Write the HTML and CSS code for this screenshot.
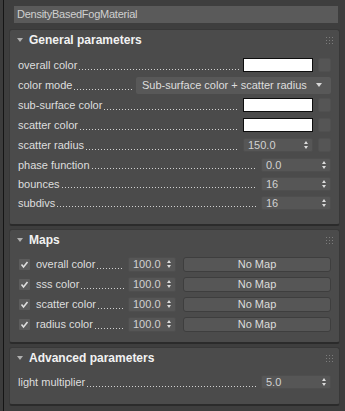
FILE: index.html
```html
<!DOCTYPE html>
<html>
<head>
<meta charset="utf-8">
<link rel="stylesheet" href="styles.css">
</head>
<body>
<div class="app">
  <div class="edge"></div>
  <div class="main">
    <div class="namefield">DensityBasedFogMaterial</div>

    <section class="rollout general">
      <header class="rh">
        <span class="tri"></span><span class="rt">General parameters</span>
        <svg class="grip" width="7" height="7" viewBox="0 0 7 7"><g fill="#7c7c7c"><rect x="0" y="0" width="1" height="1"/><rect x="3" y="0" width="1" height="1"/><rect x="6" y="0" width="1" height="1"/><rect x="0" y="3" width="1" height="1"/><rect x="3" y="3" width="1" height="1"/><rect x="6" y="3" width="1" height="1"/><rect x="0" y="6" width="1" height="1"/><rect x="3" y="6" width="1" height="1"/><rect x="6" y="6" width="1" height="1"/></g></svg>
      </header>
      <div class="rb">
        <div class="row"><span class="lbl">overall color</span><span class="lead"></span><span class="sw"></span><span class="sq"></span></div>
        <div class="row"><span class="lbl">color mode</span><span class="lead"></span><span class="dd"><span>Sub-surface color + scatter radius</span><svg width="6" height="4" viewBox="0 0 6 4"><polygon points="0,0 6,0 3,4" fill="#d8d8d8"/></svg></span></div>
        <div class="row"><span class="lbl">sub-surface color</span><span class="lead"></span><span class="sw"></span><span class="sq"></span></div>
        <div class="row"><span class="lbl">scatter color</span><span class="lead"></span><span class="sw"></span><span class="sq"></span></div>
        <div class="row"><span class="lbl">scatter radius</span><span class="lead"></span><span class="sp"><span>150.0</span><svg class="ar" width="4" height="8" viewBox="0 0 4 8"><polygon points="0,3 2,0 4,3" fill="#dcdcdc"/><polygon points="0,5 4,5 2,8" fill="#dcdcdc"/></svg></span><span class="sq"></span></div>
        <div class="row s"><span class="lbl">phase function</span><span class="lead"></span><span class="sp"><span>0.0</span><svg class="ar" width="4" height="8" viewBox="0 0 4 8"><polygon points="0,3 2,0 4,3" fill="#dcdcdc"/><polygon points="0,5 4,5 2,8" fill="#dcdcdc"/></svg></span></div>
        <div class="row s"><span class="lbl">bounces</span><span class="lead"></span><span class="sp"><span>16</span><svg class="ar" width="4" height="8" viewBox="0 0 4 8"><polygon points="0,3 2,0 4,3" fill="#dcdcdc"/><polygon points="0,5 4,5 2,8" fill="#dcdcdc"/></svg></span></div>
        <div class="row s"><span class="lbl">subdivs</span><span class="lead"></span><span class="sp"><span>16</span><svg class="ar" width="4" height="8" viewBox="0 0 4 8"><polygon points="0,3 2,0 4,3" fill="#dcdcdc"/><polygon points="0,5 4,5 2,8" fill="#dcdcdc"/></svg></span></div>
      </div>
    </section>

    <section class="rollout maps">
      <header class="rh">
        <span class="tri"></span><span class="rt">Maps</span>
        <svg class="grip" width="7" height="7" viewBox="0 0 7 7"><g fill="#7c7c7c"><rect x="0" y="0" width="1" height="1"/><rect x="3" y="0" width="1" height="1"/><rect x="6" y="0" width="1" height="1"/><rect x="0" y="3" width="1" height="1"/><rect x="3" y="3" width="1" height="1"/><rect x="6" y="3" width="1" height="1"/><rect x="0" y="6" width="1" height="1"/><rect x="3" y="6" width="1" height="1"/><rect x="6" y="6" width="1" height="1"/></g></svg>
      </header>
      <div class="rb">
        <div class="row"><span class="chk"><svg width="11" height="11" viewBox="0 0 11 11"><path d="M2.5 5.5 L4.5 8 L8.5 3" fill="none" stroke="#dedede" stroke-width="1.6"/></svg></span><span class="lbl">overall color</span><span class="lead"></span><span class="sp n"><span>100.0</span><svg class="ar" width="4" height="8" viewBox="0 0 4 8"><polygon points="0,3 2,0 4,3" fill="#dcdcdc"/><polygon points="0,5 4,5 2,8" fill="#dcdcdc"/></svg></span><span class="nm">No Map</span></div>
        <div class="row"><span class="chk"><svg width="11" height="11" viewBox="0 0 11 11"><path d="M2.5 5.5 L4.5 8 L8.5 3" fill="none" stroke="#dedede" stroke-width="1.6"/></svg></span><span class="lbl">sss color</span><span class="lead"></span><span class="sp n"><span>100.0</span><svg class="ar" width="4" height="8" viewBox="0 0 4 8"><polygon points="0,3 2,0 4,3" fill="#dcdcdc"/><polygon points="0,5 4,5 2,8" fill="#dcdcdc"/></svg></span><span class="nm">No Map</span></div>
        <div class="row"><span class="chk"><svg width="11" height="11" viewBox="0 0 11 11"><path d="M2.5 5.5 L4.5 8 L8.5 3" fill="none" stroke="#dedede" stroke-width="1.6"/></svg></span><span class="lbl">scatter color</span><span class="lead"></span><span class="sp n"><span>100.0</span><svg class="ar" width="4" height="8" viewBox="0 0 4 8"><polygon points="0,3 2,0 4,3" fill="#dcdcdc"/><polygon points="0,5 4,5 2,8" fill="#dcdcdc"/></svg></span><span class="nm">No Map</span></div>
        <div class="row"><span class="chk"><svg width="11" height="11" viewBox="0 0 11 11"><path d="M2.5 5.5 L4.5 8 L8.5 3" fill="none" stroke="#dedede" stroke-width="1.6"/></svg></span><span class="lbl">radius color</span><span class="lead"></span><span class="sp n"><span>100.0</span><svg class="ar" width="4" height="8" viewBox="0 0 4 8"><polygon points="0,3 2,0 4,3" fill="#dcdcdc"/><polygon points="0,5 4,5 2,8" fill="#dcdcdc"/></svg></span><span class="nm">No Map</span></div>
      </div>
    </section>

    <section class="rollout adv">
      <header class="rh">
        <span class="tri"></span><span class="rt">Advanced parameters</span>
        <svg class="grip" width="7" height="7" viewBox="0 0 7 7"><g fill="#7c7c7c"><rect x="0" y="0" width="1" height="1"/><rect x="3" y="0" width="1" height="1"/><rect x="6" y="0" width="1" height="1"/><rect x="0" y="3" width="1" height="1"/><rect x="3" y="3" width="1" height="1"/><rect x="6" y="3" width="1" height="1"/><rect x="0" y="6" width="1" height="1"/><rect x="3" y="6" width="1" height="1"/><rect x="6" y="6" width="1" height="1"/></g></svg>
      </header>
      <div class="rb">
        <div class="row"><span class="lbl">light multiplier</span><span class="lead"></span><span class="sp"><span>5.0</span><svg class="ar" width="4" height="8" viewBox="0 0 4 8"><polygon points="0,3 2,0 4,3" fill="#dcdcdc"/><polygon points="0,5 4,5 2,8" fill="#dcdcdc"/></svg></span></div>
      </div>
    </section>
  </div>
</div>
</body>
</html>
```

FILE: styles.css
```css
* { box-sizing: border-box; }
html, body { margin: 0; padding: 0; }
body {
  width: 345px;
  height: 411px;
  overflow: hidden;
  background: #3c3c3c;
  font-family: "Liberation Sans", Arial, sans-serif;
  font-size: 11px;
  color: #dedede;
}
.app { display: flex; height: 411px; }
.edge { width: 3px; background: #3c3c3c; }
.main {
  flex: 1;
  border-left: 1px solid #151515;
  background: #3e3e3e;
  padding: 6px 5px 0 5px;
}
.namefield {
  margin: 0 2px 0 5px;
  height: 17px;
  line-height: 17px;
  background: #5a5a5a;
  color: #d0d0d0;
  padding-left: 3px;
  letter-spacing: -0.25px;
}
.rollout {
  margin-top: 6px;
  background: #4b4b4b;
  border: 1px solid #383838;
  border-bottom: 2px solid #2b2b2b;
  border-radius: 3px;
}
.rollout + .rollout { margin-top: 3px; }
.rh {
  height: 20px;
  display: flex;
  align-items: center;
  padding: 0 6px 0 7px;
}
.tri {
  width: 0;
  height: 0;
  border-left: 3px solid transparent;
  border-right: 3px solid transparent;
  border-top: 4px solid #b0b0b0;
  margin-right: 6px;
}
.rt {
  flex: 1;
  font-weight: bold;
  font-size: 12px;
  color: #f2f2f2;
}
.rb { padding: 5px 8px 12px 8px; }
.maps .rb { padding: 4px 8px 8px 8px; }
.adv .rb { padding: 4px 8px 12px 8px; }
.row {
  display: flex;
  align-items: center;
  height: 20px;
}
.row.s { height: 19px; }
.lbl { white-space: nowrap; }
.lead {
  flex: 1;
  height: 1px;
  margin: 8px 4px 0 2px;
  background: linear-gradient(to right, #d2d2d2 1px, transparent 1px) 0 0 / 3px 1px repeat-x;
}
.sw {
  width: 70px;
  height: 14px;
  background: #ffffff;
  border: 1px solid #0e0e0e;
}
.sq {
  width: 13px;
  height: 14px;
  margin-left: 5px;
  background: #555555;
  border: 1px solid #505050;
  border-radius: 2px;
}
.dd {
  width: 195px;
  height: 17px;
  background: #585858;
  border-radius: 2px;
  display: flex;
  align-items: center;
  justify-content: space-between;
  padding: 0 9px 0 6px;
  color: #dedede;
}
.sp {
  width: 70px;
  height: 14px;
  background: #565656;
  border: 1px solid #4e4e4e;
  border-radius: 2px;
  display: flex;
  align-items: center;
  justify-content: space-between;
  padding: 0 4px 0 4px;
  color: #d2d2d2;
}
.sp.n { width: 48px; height: 15px; }
.chk {
  width: 11px;
  height: 11px;
  margin: 0 6px 0 1px;
  background: #5c5c5c;
  border-radius: 1px;
  display: flex;
}
.nm {
  width: 148px;
  height: 15px;
  margin-left: 7px;
  background: #565656;
  border: 1px solid #3e3e3e;
  border-radius: 3px;
  text-align: center;
  line-height: 13px;
  color: #dcdcdc;
}
```
